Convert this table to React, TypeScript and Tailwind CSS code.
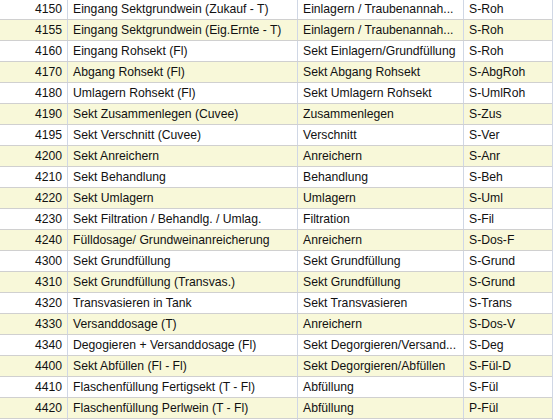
const rows: [string, string, string, string][] = [
  ["4150", "Eingang Sektgrundwein (Zukauf - T)", "Einlagern / Traubenannah...", "S-Roh"],
  ["4155", "Eingang Sektgrundwein (Eig.Ernte - T)", "Einlagern / Traubenannah...", "S-Roh"],
  ["4160", "Eingang Rohsekt (Fl)", "Sekt Einlagern/Grundfüllung", "S-Roh"],
  ["4170", "Abgang Rohsekt (Fl)", "Sekt Abgang Rohsekt", "S-AbgRoh"],
  ["4180", "Umlagern Rohsekt (Fl)", "Sekt Umlagern Rohsekt", "S-UmlRoh"],
  ["4190", "Sekt Zusammenlegen (Cuvee)", "Zusammenlegen", "S-Zus"],
  ["4195", "Sekt Verschnitt (Cuvee)", "Verschnitt", "S-Ver"],
  ["4200", "Sekt Anreichern", "Anreichern", "S-Anr"],
  ["4210", "Sekt Behandlung", "Behandlung", "S-Beh"],
  ["4220", "Sekt Umlagern", "Umlagern", "S-Uml"],
  ["4230", "Sekt Filtration / Behandlg. / Umlag.", "Filtration", "S-Fil"],
  ["4240", "Fülldosage/ Grundweinanreicherung", "Anreichern", "S-Dos-F"],
  ["4300", "Sekt Grundfüllung", "Sekt Grundfüllung", "S-Grund"],
  ["4310", "Sekt Grundfüllung (Transvas.)", "Sekt Grundfüllung", "S-Grund"],
  ["4320", "Transvasieren in Tank", "Sekt Transvasieren", "S-Trans"],
  ["4330", "Versanddosage (T)", "Anreichern", "S-Dos-V"],
  ["4340", "Degogieren + Versanddosage (Fl)", "Sekt Degorgieren/Versand...", "S-Deg"],
  ["4400", "Sekt Abfüllen (Fl - Fl)", "Sekt Degorgieren/Abfüllen", "S-Fül-D"],
  ["4410", "Flaschenfüllung Fertigsekt (T - Fl)", "Abfüllung", "S-Fül"],
  ["4420", "Flaschenfüllung Perlwein (T - Fl)", "Abfüllung", "P-Fül"],
  ["", "", "", ""],
];

export default function App() {
  return (
    <div className="h-[420px] w-[555px] overflow-hidden bg-white font-['Liberation_Sans',Arial,sans-serif] text-[12.2px] text-[#111]">
      <div className="-mt-px w-[553px] border-r border-[#d0d7e5]">
        {rows.map((r, i) => (
          <div
            key={i}
            className={
              "flex h-[21px] border-b border-[#d0d0d0] leading-[20px] " +
              (i % 2 === 1 ? "bg-[#f8f8d9]" : "bg-white")
            }
          >
            <div className="w-[68px] shrink-0 border-r border-[#d0d7e5] pr-[5px] text-right">{r[0]}</div>
            <div className="w-[230px] shrink-0 overflow-hidden whitespace-nowrap border-r border-[#d0d7e5] pl-[5px]">{r[1]}</div>
            <div className="w-[166px] shrink-0 overflow-hidden whitespace-nowrap border-r border-[#d0d7e5] pl-[5px]">{r[2]}</div>
            <div className="flex-1 overflow-hidden whitespace-nowrap pl-[5px]">{r[3]}</div>
          </div>
        ))}
      </div>
    </div>
  );
}
